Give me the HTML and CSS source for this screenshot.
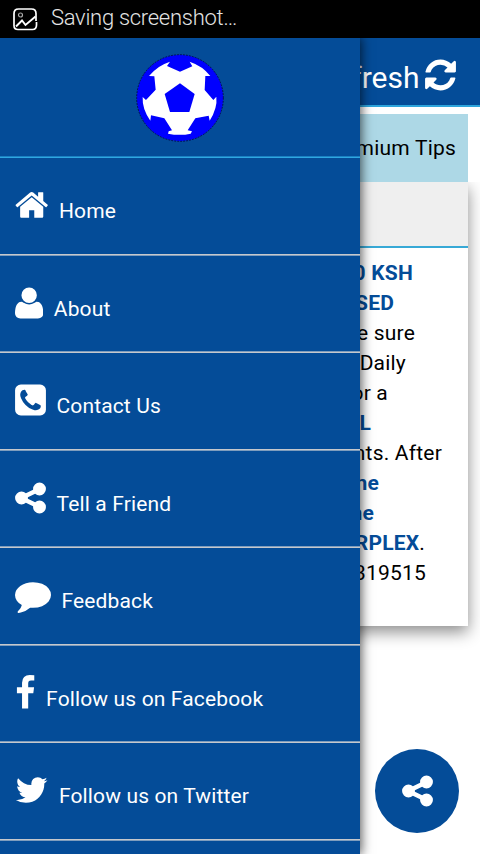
FILE: index.html
```
<!DOCTYPE html>
<html lang="en">
<head>
<meta charset="utf-8">
<title>Daily Tips</title>
<link rel="stylesheet" href="styles.css">
</head>
<body>
<svg class="defs" width="0" height="0">
  <symbol id="share" viewBox="128 0 1536 1792"><path d="M1344 1024q133 0 226.5 93.5t93.5 226.5-93.5 226.5-226.5 93.5-226.5-93.5-93.5-226.5q0-12 2-34l-360-180q-92 86-218 86-133 0-226.5-93.5t-93.5-226.5 93.5-226.5 226.5-93.5q126 0 218 86l360-180q-2-22-2-34 0-133 93.5-226.5t226.5-93.5 226.5 93.5 93.5 226.5-93.5 226.5-226.5 93.5q-126 0-218-86l-360 180q2 22 2 34t-2 34l360 180q92-86 218-86z"/></symbol>
</svg>
<div class="status">
  <svg class="status-icon" viewBox="0 0 26 24" fill="none" stroke="#fff"><path d="M23 13V5.500Q23 1 18.500 1H5.500Q1 1 1 5.500V17.500Q1 21.500 5 21.500H19.500Q23.500 21.500 23.500 17V14" stroke-width="1.700"/><path d="M3 18.500L9 12.500L12.500 17L22.500 8.500" stroke-width="1.900"/><circle cx="7.500" cy="7" r="2" stroke="#aaa" stroke-width="1.200"/></svg>
  <span>Saving screenshot…</span>
</div>
<div class="screen">
  <header class="topbar">
    <span class="refresh">fresh</span>
    <svg class="refresh-icon" viewBox="128 0 1536 1792"><path d="M1639 1056q0 5-1 7-64 268-268 434.5t-478 166.5q-146 0-282.5-55t-243.5-157l-129 129q-19 19-45 19t-45-19-19-45v-448q0-26 19-45t45-19h448q26 0 45 19t19 45-19 45l-137 137q71 66 161 102t187 36q134 0 250-65t186-179q11-17 53-117 8-23 30-23h192q13 0 22.5 9.500t9.500 22.500zm25-800v448q0 26-19 45t-45 19h-448q-26 0-45-19t-19-45 19-45l138-138q-148-137-349-137-134 0-250 65t-186 179q-11 17-53 117-8 23-30 23h-199q-13 0-22.500-9.500t-9.500-22.500v-7q65-268 270-434.500t480-166.500q146 0 284 55.500t245 156.500l130-129q19-19 45-19t45 19 19 45z"/></svg>
  </header>
  <div class="tab">mium Tips</div>
  <section class="card">
    <div class="card-head"></div>
    <div class="card-body">
      <p class="l1"><b>0 KSH</b></p>
      <p class="l2"><b>SED</b></p>
      <p class="l3">e sure</p>
      <p class="l4">Daily</p>
      <p class="l5">or a</p>
      <p class="l6"><b>L</b></p>
      <p class="l7">nts. After</p>
      <p class="l8"><b>ne</b></p>
      <p class="l9"><b>ne</b></p>
      <p class="l10"><b>RPLEX</b>.</p>
      <p class="l11">319515</p>
    </div>
  </section>
  <div class="fab"><svg class="i-share"><use href="#share"/></svg></div>
  <nav class="drawer">
    <div class="brand">
      <svg class="ball" viewBox="49 43 264 264">
        <circle cx="181" cy="175" r="130" fill="#00f"/>
        <circle cx="181" cy="175" r="130" fill="none" stroke="#001050" stroke-width="3" stroke-dasharray="5 4"/>
        <path fill="#fff" d="M88 109Q113 78 151 66L142 79L181 96L218 80L210 66Q249 79 272 109L257 109L255 151L281 181L290 171Q294 205 270 243L267 228L227 236L204 272L217 275L213 282Q181 289 145 282L147 275L157 272L134 236L94 227L92 243Q67 208 69 172L79 181L108 150L104 110Z"/>
        <path fill="#00f" d="M181 131L225 163L209 217H151L135 163Z"/>
      </svg>
    </div>
    <a class="item"><svg class="i-home" viewBox="64 0 1664 1792"><path d="M1472 992v480q0 26-19 45t-45 19h-384v-384h-256v384h-384q-26 0-45-19t-19-45v-480q0-1 .5-3t.5-3l575-474 575 474q1 2 1 6zm223-69l-62 74q-8 9-21 11h-3q-13 0-21-7l-692-577-692 577q-12 8-24 7-13-2-21-11l-62-74q-8-10-7-23.500t11-21.500l719-599q32-26 76-26t76 26l244 204v-195q0-14 9-23t23-9h192q14 0 23 9t9 23v408l219 182q10 8 11 21.500t-7 23.500z"/></svg><span>Home</span></a>
    <a class="item"><svg class="i-user" viewBox="192 0 1408 1792"><path d="M1600 1405q0 120-73 189.500t-194 69.500h-874q-121 0-194-69.500t-73-189.500q0-53 3.500-103.500t14-109 26.500-108.500 43-97.500 62-81 85.500-53.500 111.500-20q9 0 42 21.500t74.500 48 108 48 133.500 21.500 133.500-21.500 108-48 74.500-48 42-21.500q61 0 111.500 20t85.500 53.500 62 81 43 97.500 26.500 108.500 14 109 3.500 103.500zm-320-893q0 159-112.500 271.500t-271.500 112.500-271.500-112.500-112.500-271.500 112.500-271.500 271.500-112.500 271.500 112.500 112.500 271.500z"/></svg><span>About</span></a>
    <a class="item"><svg class="i-share" viewBox="128 0 1536 1792"><path d="M1408 1193q0-11-2-16t-18-16.500-40.500-25-47.500-26.500-45.500-25-28.500-15q-5-3-19-13t-25-15-21-5q-15 0-36.500 20.500t-39.500 45-38.500 45-33.500 20.500q-7 0-16.500-3.500t-15.500-6.500-17-9.500-14-8.500q-99-55-170-126.500t-127-170.500q-2-3-8.500-14t-9.500-17-6.500-15.500-3.500-16.500q0-13 20.500-33.500t45-38.500 45-39.500 20.500-36.500q0-10-5-21t-15-25-13-19q-3-6-15-28.500t-25-45.500-26.500-47.500-25-40.500-16.500-18-16-2q-48 0-101 22-46 21-80 94.500t-34 130.500q0 16 2.500 34t5 30.500 9 33 10 29.500 12.500 33 11 30q60 164 216.500 320.500t320.500 216.500q6 2 30 11t33 12.500 29.500 10 33 9 30.500 5 34 2.500q57 0 130.500-34t94.500-80q22-53 22-101zm256-777v960q0 119-84.500 203.500t-203.500 84.500h-960q-119 0-203.500-84.500t-84.500-203.500v-960q0-119 84.500-203.500t203.500-84.500h960q119 0 203.500 84.500t84.500 203.500z"/></svg><span>Contact Us</span></a>
    <a class="item"><svg class="i-share"><use href="#share"/></svg><span>Tell a Friend</span></a>
    <a class="item"><svg class="i-comment" viewBox="0 0 1792 1792"><path d="M1792 896q0 174-120 321.500t-326 233-450 85.500q-70 0-145-8-198 175-460 242-49 14-114 22-17 2-30.500-9t-17.500-29v-1q-3-4-.5-12t2-10 4.500-9.500l6-9 7-8.500 8-9q7-8 31-34.500t34.500-38 31-39.500 32.500-51 27-59 26-76q-157-89-247.500-220t-90.500-281q0-130 71-248.500t191-204.500 286-136.500 348-50.500q244 0 450 85.500t326 233 120 321.500z"/></svg><span>Feedback</span></a>
    <a class="item"><svg class="i-fb" viewBox="384 0 1024 1792"><path d="M1343 12v264h-157q-86 0-116 36t-30 108v189h293l-39 296h-254v759h-306v-759h-255v-296h255v-218q0-186 104-288.500t277-102.500q147 0 228 12z"/></svg><span>Follow us on Facebook</span></a>
    <a class="item"><svg class="i-home" viewBox="64 0 1664 1792"><path d="M1684 408q-67 98-162 167 1 14 1 42 0 130-38 259.500t-115.500 248.500-184.500 210.500-258 146-323 54.500q-271 0-496-145 35 4 78 4 225 0 401-138-105-2-188-64.500t-114-159.500q33 5 61 5 43 0 85-11-112-23-185.500-111.500t-73.500-205.500v-4q68 38 146 41-66-44-105-115t-39-154q0-88 44-163 121 149 294.500 238.500t371.500 99.500q-8-38-8-74 0-134 94.500-228.500t228.500-94.500q140 0 236 102 109-21 205-78-37 115-142 178 93-10 186-50z"/></svg><span>Follow us on Twitter</span></a>
  </nav>
</div>
</body>
</html>
```
FILE: styles.css
```
* { box-sizing: border-box; }
body {
  margin: 0;
  width: 480px;
  height: 854px;
  overflow: hidden;
  display: flex;
  flex-direction: column;
  background: #fff;
  font-family: Roboto, "Liberation Sans", sans-serif;
  font-size: 21px;
  color: #000;
}
.defs { position: absolute; }
svg { display: block; flex: none; }
.status {
  height: 38px;
  flex: none;
  display: flex;
  align-items: center;
  gap: 12px;
  padding: 0 0 3px 13px;
  background: #000;
  color: #e4e4e4;
  font-weight: 300;
  font-size: 22px;
  letter-spacing: -.28px;
}
.status-icon { width: 26px; height: 24px; margin-top: 4px; }
.screen { position: relative; flex: 1; overflow: hidden; }
.topbar {
  height: 69px;
  display: flex;
  justify-content: flex-end;
  gap: 5px;
  padding: 19px 24.5px 0 0;
  background: #044c98;
  border-bottom: 2px solid #2ea5dc;
  color: #fff;
  font-size: 30px;
  line-height: 41px;
}
.refresh-icon { width: 31px; height: 36px; fill: #fff; }
.tab {
  height: 68px;
  margin: 7px 12px 0;
  padding-right: 12px;
  background: #add8e6;
  line-height: 69px;
  text-align: right;
  letter-spacing: .2px;
}
.card {
  height: 444px;
  margin: 0 12px;
  background: #fff;
  box-shadow: 0 6px 15px rgba(0, 0, 0, .45);
  clip-path: inset(0 -30px -30px 0);
}
.card-head {
  height: 66px;
  background: #efefef;
  border-bottom: 2px solid #38a9d6;
}
.card-body { padding-top: 10px; letter-spacing: .2px; }
.card-body p { margin: 0; line-height: 30px; text-align: right; }
.card-body b { color: #044c98; font-weight: 700; }
.card-body .l1 { padding-right: 55px; }
.card-body .l2 { padding-right: 74px; }
.card-body .l3 { padding-right: 53px; }
.card-body .l4 { padding-right: 62px; }
.card-body .l5 { padding-right: 80px; }
.card-body .l6 { padding-right: 97px; }
.card-body .l7 { padding-right: 26px; }
.card-body .l8 { padding-right: 89px; }
.card-body .l9 { padding-right: 94px; }
.card-body .l10 { padding-right: 43px; }
.card-body .l11 { padding-right: 42px; }
.fab {
  position: absolute;
  right: 21px;
  bottom: 21px;
  width: 84px;
  height: 84px;
  border-radius: 50%;
  background: #044c98;
  display: flex;
  align-items: center;
  justify-content: center;
  fill: #fff;
}
.drawer {
  position: absolute;
  top: 0;
  left: 0;
  width: 360px;
  height: 816px;
  background: #044c98;
  box-shadow: 0 0 11px 1px rgba(0, 0, 0, .7);
}
.brand {
  height: 120px;
  display: flex;
  justify-content: center;
  padding-top: 16px;
  border-bottom: 1px solid #2fa8e2;
  box-shadow: inset 0 -1px #1b80c2;
}
.ball { width: 88px; height: 88px; }
.item {
  height: 98px;
  display: flex;
  gap: 10.5px;
  padding: 29px 0 0 15px;
  color: #fff;
  fill: #fff;
  letter-spacing: .14px;
  line-height: 48px;
  border-bottom: 1px solid #7f9dbd;
  box-shadow: inset 0 -1px #c6c8cc;
}
.item:nth-child(odd) {
  height: 97px;
  border-bottom-color: #c6c8cc;
  box-shadow: inset 0 -1px #7f9dbd;
}
.i-home { width: 33.4px; height: 36px; }
.i-user { width: 28.3px; height: 36px; }
.i-share { width: 31px; height: 36px; }
.i-comment { width: 36px; height: 36px; }
.i-fb { width: 20.6px; height: 36px; }
```
